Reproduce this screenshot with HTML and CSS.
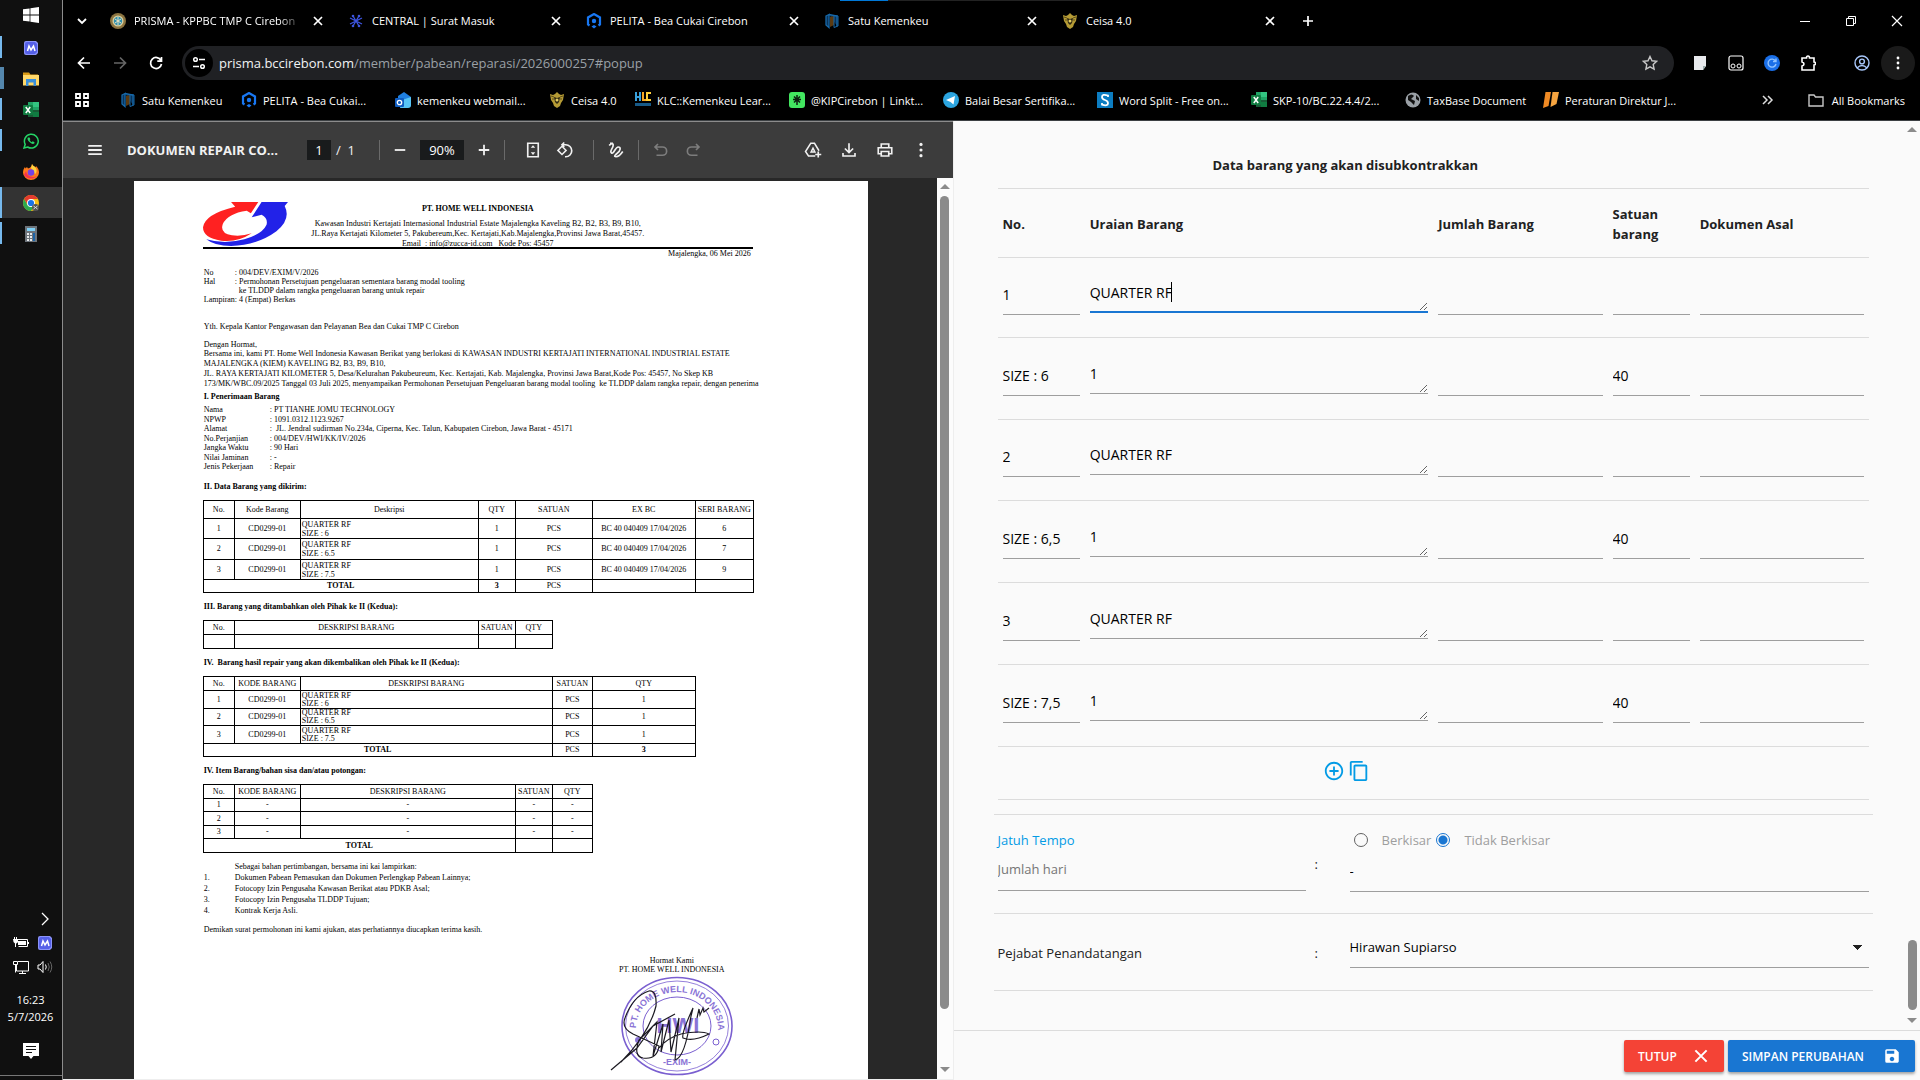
FILE: index.html
```html
<!DOCTYPE html>
<html lang="id">
<head>
<meta charset="utf-8">
<title>PRISMA - KPPBC TMP C Cirebon</title>
<link rel="stylesheet" href="styles.css">
</head>
<body>
<svg class="defs" aria-hidden="true">
  <symbol id="i-close" viewBox="0 0 16 16"><path d="M4 4l8 8M12 4l-8 8" stroke="currentColor" stroke-width="1.7" fill="none"/></symbol>
  <symbol id="i-m" viewBox="0 0 16 16"><path d="M3 1h10l2 2v10l-2 2H3q-2 0-2-2V3q0-2 2-2z" fill="#8b93f8"/><path d="M4 2h8l2 2v8l-2 2H4q-2 0-2-2V4q0-2 2-2z" fill="#5560e8"/><path d="M4.500 11L6 6l2 4 2.500-4L12 11" stroke="#fff" stroke-width="1.500" fill="none"/></symbol>
  <symbol id="i-excel" viewBox="0 0 16 16"><path d="M5 0h5v4H5z" fill="#21a366"/><path d="M10 0h6v5h-6z" fill="#33c481"/><path d="M5 4h5v4H5z" fill="#107c41"/><path d="M10 5h6v5h-6z" fill="#21a366"/><path d="M5 8h11v7H5z" fill="#185c37"/><path d="M10 10h6v5h-6z" fill="#107c41"/><rect y="3" width="10" height="10" rx="1" fill="#107c41"/><path d="M2.800 5l4.400 6M7.200 5l-4.400 6" stroke="#fff" stroke-width="1.500"/></symbol>
  <symbol id="i-pelita" viewBox="0 0 16 16"><path d="M3.500 12.500L2 11.500v-7L8 1l6 3.500v7l-1.500 1" fill="none" stroke="#1877f2" stroke-width="2.200"/><circle cx="8" cy="8" r="2.200" fill="#1877f2"/><path d="M5.500 13.500L8 12l2.500 1.500L8 15.600z" fill="#1877f2"/></symbol>
  <symbol id="i-satu" viewBox="0 0 16 16"><path d="M5 1.500l8 1.500v10M2 3l3-1.500v13L2 12z" fill="#0a3358" stroke="#1769aa" stroke-width="1.300"/><path d="M6 4l4-1v9l-4 2z" fill="#5b3a10"/><path d="M10 2.500l4 .5v10l-4 1.500z" fill="none" stroke="#1769aa"/></symbol>
  <symbol id="i-ceisa" viewBox="0 0 16 16"><path d="M1 2l3 1 2-1 2-2 2 2 2 1 3-1-1 6-2 3-1 3-3 2-3-2-1-3-2-3z" fill="#b59b35"/><path d="M5 5l3 1 3-1-1 5-2 2-2-2z" fill="#2c2610"/><circle cx="8" cy="8" r="1.500" fill="#e4cd62"/><path d="M2 4l3 1M14 4l-3 1M3 7h2M13 7h-2" stroke="#4c4014" stroke-width=".8"/></symbol>
  <symbol id="i-dots" viewBox="0 0 16 16"><g fill="currentColor"><circle cx="8" cy="3" r="1.400"/><circle cx="8" cy="8" r="1.400"/><circle cx="8" cy="13" r="1.400"/></g></symbol>
</svg>

<nav class="taskbar" aria-label="Taskbar">
  <ul class="task-list">
    <li class="task start"><button aria-label="Start"><svg viewBox="0 0 16 16"><path d="M0 2.300L6.600 1.400v6.200H0zM7.400 1.300L16 0v7.600H7.400zM0 8.400h6.600v6.200L0 13.700zM7.400 8.400H16V16l-8.600-1.300z" fill="#fff"/></svg></button></li>
    <li class="task open"><button aria-label="Mail"><svg><use href="#i-m"/></svg></button></li>
    <li class="task open multi"><button aria-label="Explorer"><svg viewBox="0 0 16 16"><path d="M0 1.500h6l1.500 2H15v3H0z" fill="#d99a16"/><path d="M0 4h16v10.500H0z" fill="#ffd869"/><path d="M3 8h10v7H10.500v-3.500h-5V15H3z" fill="#3a8fdb"/></svg></button></li>
    <li class="task open"><button aria-label="Excel"><svg><use href="#i-excel"/></svg></button></li>
    <li class="task open"><button aria-label="WhatsApp"><svg viewBox="0 0 16 16"><path d="M1 15l1.200-3.700A6.900 6.900 0 1 1 4.700 14z" fill="none" stroke="#25d366" stroke-width="1.500"/><path d="M5 4.500c-1 1-.5 2.500 1.200 4.300S10 11.500 11.300 10.400l.2-1.200-1.800-.9-1 .9C7.800 8.800 7 8 6.600 7.100l.8-.8L6.500 4.500z" fill="#25d366"/></svg></button></li>
    <li class="task"><button aria-label="Firefox"><svg viewBox="0 0 16 16"><path d="M9 0c1 2 2 2 3.500 3.500L13 2c2 2 3 4 3 6.500A8 7.500 0 0 1 0 8.500C0 6 1 4 2 3l.5 1.500L4 3l1 1.500C7 4 9 2.500 9 0z" fill="#ff7a1a"/><path d="M9 0c1 2 2 2 3.500 3.500C14 5 14 9 12 10L8 4z" fill="#ffd23e"/><path d="M1 11a8 7 0 0 0 13 1c-4 2-10 1-11-5z" fill="#f5314f"/><circle cx="8" cy="8.500" r="3.300" fill="#7542e5"/></svg></button></li>
    <li class="task open active"><button aria-label="Chrome"><svg viewBox="0 0 16 16"><circle cx="8" cy="8" r="8" fill="#fbc116"/><path d="M1 4a8 8 0 0 1 14 0H8L5 10z" fill="#e33b2e"/><path d="M1.100 4A8 8 0 0 0 8 16l3.500-6H4.500z" fill="#2da94f"/><circle cx="8" cy="8" r="4" fill="#fff"/><circle cx="8" cy="8" r="3.100" fill="#1a73e8"/><circle cx="12.500" cy="12.500" r="3.500" fill="#555"/><path d="M10.500 11l4 3M14.500 11l-4 3" stroke="#ddd"/></svg></button></li>
    <li class="task open"><button aria-label="Calculator"><svg viewBox="0 0 16 16"><path d="M2 0h12v16H2z" fill="#6d747b"/><path d="M4 2h8v3H4z" fill="#7fd0f5"/><path d="M4 7h2v2H4zM7 7h2v2H7zM4 10h2v2H4zM7 10h2v2H7zM4 13h2v2H4zM7 13h2v2H7z" fill="#e8eaec"/><path d="M10 7h2v8h-2z" fill="#1d64a8"/></svg></button></li>
  </ul>
  <div class="tray">
    <button class="tray-more" aria-label="Show hidden icons"><svg viewBox="0 0 16 16"><path d="M5 2l6 6-6 6" stroke="#fff" stroke-width="1.300" fill="none"/></svg></button>
    <div class="tray-icons">
      <svg viewBox="0 0 16 16"><path d="M2.500 4.500h12v7h-9" fill="none" stroke="#fff"/><path d="M5 6h8v4H5zM15 7h1v2h-1zM0 4h5v3q-2 3-4.500 0zM1 2h1v2H1zM3 2h1v2H3z" fill="#fff"/><path d="M2.500 7v5" stroke="#fff"/></svg>
      <svg><use href="#i-m"/></svg>
      <svg viewBox="0 0 16 16"><path d="M3.500 6v6h12V2.500H5M9.500 12v2.500M6 14.500h7M.5 2.500h4v3h-4zM2.500 5.500v8" fill="none" stroke="#fff"/></svg>
      <svg viewBox="0 0 16 16"><path d="M1 6h2l3-3.500v11L3 10H1z" fill="none" stroke="#fff"/><path d="M8.500 5.500q1.500 2.500 0 5" fill="none" stroke="#fff"/><path d="M11 4q2.500 4 0 8M13 2.500q3.500 5.500 0 11" fill="none" stroke="#666"/></svg>
    </div>
    <p class="clock">16:23<br>5/7/2026</p>
    <button class="notif" aria-label="Notifications"><svg viewBox="0 0 16 16"><path d="M0 0h16v13h-5.500L8 16l-2.500-3H0z" fill="#fff"/><path d="M3 3.500h10M3 6.500h10M3 9.500h6" stroke="#101010"/></svg></button>
  </div>
</nav>

<div class="browser">
  <header class="chrome">
    <div class="top-strip"></div>
    <div class="tabs">
      <button class="tab-search" aria-label="Search tabs"><svg viewBox="0 0 16 16"><path d="M4 6l4 4 4-4" stroke="#fff" stroke-width="1.800" fill="none"/></svg></button>
      <div class="tab"><svg viewBox="0 0 16 16"><circle cx="8" cy="8" r="8" fill="#8c7440"/><circle cx="8" cy="8" r="5.500" fill="#d8cfa0"/><circle cx="8" cy="8" r="4.200" fill="#2f8fae"/><path d="M5 6l6 4M11 6l-6 4M8 4v8" stroke="#e7e2c0"/></svg><span class="tab-title faded">PRISMA - KPPBC TMP C Cirebon</span><button aria-label="Close"><svg><use href="#i-close"/></svg></button></div>
      <div class="tab"><svg viewBox="0 0 16 16"><path d="M5 3l6 10M11 3L5 13M2 5l12 6M14 5L2 11" stroke="#3d55e0" stroke-width="1.300"/><g fill="#3d55e0"><circle cx="5" cy="3" r="1.300"/><circle cx="11" cy="3" r="1.300"/><circle cx="5" cy="13" r="1.300"/><circle cx="11" cy="13" r="1.300"/></g></svg><span class="tab-title">CENTRAL | Surat Masuk</span><button aria-label="Close"><svg><use href="#i-close"/></svg></button></div>
      <div class="tab"><svg><use href="#i-pelita"/></svg><span class="tab-title">PELITA - Bea Cukai Cirebon</span><button aria-label="Close"><svg><use href="#i-close"/></svg></button></div>
      <div class="tab"><svg><use href="#i-satu"/></svg><span class="tab-title">Satu Kemenkeu</span><button aria-label="Close"><svg><use href="#i-close"/></svg></button></div>
      <div class="tab"><svg><use href="#i-ceisa"/></svg><span class="tab-title">Ceisa 4.0</span><button aria-label="Close"><svg><use href="#i-close"/></svg></button></div>
      <button class="new-tab" aria-label="New tab"><svg viewBox="0 0 16 16"><path d="M8 3v10M3 8h10" stroke="#fff" stroke-width="1.700"/></svg></button>
      <div class="win-controls">
        <button aria-label="Minimize"><svg viewBox="0 0 16 16"><path d="M3 8.500h10" stroke="#fff"/></svg></button>
        <button aria-label="Restore"><svg viewBox="0 0 16 16"><path d="M3.500 5.500h7v7h-7zM5.500 5.500v-2h7v7h-2" stroke="#fff" fill="none"/></svg></button>
        <button aria-label="Close window"><svg viewBox="0 0 16 16"><path d="M3 3l10 10M13 3L3 13" stroke="#fff" stroke-width="1.200"/></svg></button>
      </div>
    </div>
    <div class="address-row">
      <button aria-label="Back"><svg viewBox="0 0 16 16"><path d="M14 8H3M8 2.500L2.500 8 8 13.500" stroke="#fff" stroke-width="1.700" fill="none"/></svg></button>
      <button aria-label="Forward"><svg viewBox="0 0 16 16"><path d="M2 8h11M8 2.500L13.500 8 8 13.500" stroke="#666" stroke-width="1.700" fill="none"/></svg></button>
      <button aria-label="Reload"><svg viewBox="0 0 16 16"><path d="M13 5.500A5.500 5.500 0 1 0 13.500 9M13.500 2v4.200H9.300" stroke="#fff" stroke-width="1.700" fill="none"/></svg></button>
      <div class="omnibox">
        <button class="site-info" aria-label="Site information"><svg viewBox="0 0 16 16"><circle cx="4.500" cy="4.500" r="1.800" stroke="#fff" stroke-width="1.500" fill="none"/><circle cx="11.500" cy="11.500" r="1.800" stroke="#fff" stroke-width="1.500" fill="none"/><path d="M8 4.500h6M2 11.500h6" stroke="#fff" stroke-width="1.500"/></svg></button>
        <span class="url"><b>prisma.bccirebon.com</b>/member/pabean/reparasi/2026000257#popup</span>
        <button class="star" aria-label="Bookmark"><svg viewBox="0 0 16 16"><path d="M8 1.500l2 4.300 4.600.5-3.400 3.200.9 4.700L8 11.800l-4.100 2.400.9-4.700L1.400 6.300 6 5.800z" fill="none" stroke="#c7c7c7" stroke-width="1.400"/></svg></button>
      </div>
      <div class="extensions">
        <button aria-label="Notes"><svg viewBox="0 0 16 16"><path d="M2 1h12v10l-3 4H2z" fill="#e8eaed"/><path d="M14 11h-3v4z" fill="#9aa"/></svg></button>
        <button aria-label="Extension"><svg viewBox="0 0 16 16"><rect x="1" y="1" width="14" height="14" rx="2" fill="none" stroke="#fff" stroke-width="1.200"/><circle cx="5" cy="11" r="2" fill="none" stroke="#fff"/><circle cx="11" cy="11" r="2" fill="none" stroke="#fff"/></svg></button>
        <button aria-label="Sync"><svg viewBox="0 0 16 16"><circle cx="8" cy="8" r="8" fill="#1a6fe8"/><path d="M11.500 6A4 4 0 1 0 12 9M12 3.500v3H9" fill="none" stroke="#8fc2ff" stroke-width="1.400"/></svg></button>
        <button aria-label="Extensions"><svg viewBox="0 0 16 16"><path d="M2 3h4.500q0-2 1.500-2t1.500 2H14v4q1.500 0 1.500 1.500T14 10v5H2v-4q2-.5 2-2t-2-2z" fill="none" stroke="#fff" stroke-width="1.600"/></svg></button>
        <button class="profile" aria-label="Profile"><svg viewBox="0 0 16 16"><g fill="none" stroke="#a8c7fa" stroke-width="1.400"><circle cx="8" cy="8" r="7"/><circle cx="8" cy="6.500" r="2.400"/><path d="M3 13q5-5 10 0"/></g></svg></button>
        <button class="menu" aria-label="Menu"><svg><use href="#i-dots"/></svg></button>
      </div>
    </div>
    <nav class="bookmarks" aria-label="Bookmarks">
      <button class="apps" aria-label="Apps"><svg viewBox="0 0 16 16"><path d="M2 2h4v4H2zM10 2h4v4h-4zM2 10h4v4H2zM10 10h4v4h-4z" fill="none" stroke="#fff" stroke-width="1.800"/></svg></button>
      <a class="bm bm-s" href="#"><svg><use href="#i-satu"/></svg>Satu Kemenkeu</a>
      <a class="bm" href="#"><svg><use href="#i-pelita"/></svg>PELITA - Bea Cukai...</a>
      <a class="bm" href="#"><svg viewBox="0 0 16 16"><path d="M3 4l6-4 7 5v8q0 2-2 2H3z" fill="#1f7fe0"/><path d="M7 8l9-3v8q0 3-3 3H5z" fill="#58c5f5"/><rect y="6" width="9" height="9" rx="1" fill="#0f5cc0"/><circle cx="4.500" cy="10.500" r="2.200" stroke="#fff" stroke-width="1.300" fill="none"/></svg>kemenkeu webmail...</a>
      <a class="bm bm-xs" href="#"><svg><use href="#i-ceisa"/></svg>Ceisa 4.0</a>
      <a class="bm" href="#"><svg viewBox="0 0 16 16"><path d="M0 0h2v4h2V0h2v9H4V6H2v3H0z" fill="#38a0dc"/><path d="M7 0h2v7h3v2H7z" fill="#f5a623"/><path d="M11 0h5v2h-3v5h3v2h-5z" fill="#ffcf3a"/><path d="M0 11h16v3H0z" fill="#175a88"/></svg>KLC::Kemenkeu Lear...</a>
      <a class="bm" href="#"><svg viewBox="0 0 16 16"><rect width="16" height="16" rx="3" fill="#43e660"/><path d="M8 3v10M4 7.500h8M5 4.500l6 6M11 4.500l-6 6" stroke="#0c1f10" stroke-width="1.500"/></svg>@KIPCirebon | Linkt...</a>
      <a class="bm" href="#"><svg viewBox="0 0 16 16"><circle cx="8" cy="8" r="8" fill="#2ca5e0"/><path d="M3 8l9-4-1.500 8.500L7.500 10z" fill="#fff"/></svg>Balai Besar Sertifika...</a>
      <a class="bm" href="#"><svg viewBox="0 0 16 16"><path d="M0 0h16v16H0z" fill="#0c7dc2"/><path d="M11 5V3.500Q5 1.500 5 5q0 2 3 3t3 3.200q0 3.300-6 1.500V11" fill="none" stroke="#fff" stroke-width="1.800"/></svg>Word Split - Free on...</a>
      <a class="bm" href="#"><svg><use href="#i-excel"/></svg>SKP-10/BC.22.4.4/2...</a>
      <a class="bm bm-m" href="#"><svg viewBox="0 0 16 16"><circle cx="8" cy="8" r="7.500" fill="#9aa0a6"/><path d="M3 4q4-3 6 0l-3 3 4 2-1 4-3-3-3-2zM11 3l3 3v3l-3-2z" fill="#111"/></svg>TaxBase Document</a>
      <a class="bm" href="#"><svg viewBox="0 0 16 16"><path d="M2.500 0H8L5.500 14 0 16z" fill="#f08a24"/><path d="M9.500 0H16l-2.500 12-6 3z" fill="#f7a540"/></svg>Peraturan Direktur J...</a>
      <button class="overflow" aria-label="More bookmarks"><svg viewBox="0 0 16 16"><path d="M4 4l4 4-4 4M9 4l4 4-4 4" stroke="#ddd" stroke-width="1.500" fill="none"/></svg></button>
      <a class="bm all" href="#"><svg viewBox="0 0 16 16"><path d="M1 3h5l1.500 2H15v9H1z" fill="none" stroke="#c7c7c7" stroke-width="1.400"/></svg>All Bookmarks</a>
    </nav>
  </header>

  <main class="split">
    <section class="viewer">
      <div class="pdf-bar">
        <button class="pdf-menu" aria-label="Menu"><svg viewBox="0 0 24 24"><path d="M3 6.500h18M3 12h18M3 17.500h18" stroke="currentColor" stroke-width="2.400"/></svg></button>
        <span class="pdf-title">DOKUMEN REPAIR CO...</span>
        <input class="pdf-page" value="1" aria-label="Page"><span class="pdf-total">/&nbsp; 1</span>
        <div class="pdf-group zoom">
          <button aria-label="Zoom out"><svg viewBox="0 0 24 24"><path d="M5 12h14" stroke="currentColor" stroke-width="2.400"/></svg></button>
          <input class="pdf-zoom" value="90%" aria-label="Zoom">
          <button aria-label="Zoom in"><svg viewBox="0 0 24 24"><path d="M5 12h14M12 5v14" stroke="currentColor" stroke-width="2.400"/></svg></button>
        </div>
        <div class="pdf-group fit">
          <button aria-label="Fit to page"><svg viewBox="0 0 24 24"><path d="M5 3h14v18H5z" fill="none" stroke="currentColor" stroke-width="2.200"/><path d="M12 5.500l3 3.500H9zM12 18.500l3-3.500H9z" fill="currentColor"/></svg></button>
          <button aria-label="Rotate"><svg viewBox="0 0 24 24"><path d="M8 7l5.500 5.500L8 18l-5.500-5.500z" fill="none" stroke="currentColor" stroke-width="2"/><path d="M11 2L8 5l3 3M9 5h4a8 8 0 0 1 0 16h-1" fill="none" stroke="currentColor" stroke-width="2.200"/></svg></button>
        </div>
        <div class="pdf-group">
          <button aria-label="Draw"><svg viewBox="0 0 24 24"><path d="M3 6c3-4 6-3 5 1s-5 7-2 9 5-8 9-8 3 5-1 8-5 5-2 5c4 0 7-4 9-7M4 3h4" fill="none" stroke="currentColor" stroke-width="2.200"/></svg></button>
        </div>
        <div class="pdf-group muted">
          <button aria-label="Undo"><svg viewBox="0 0 24 24"><path d="M8 4L4 8l4 4M4 8h10a5 5 0 0 1 0 11H6" fill="none" stroke="currentColor" stroke-width="2.200"/></svg></button>
          <button aria-label="Redo"><svg viewBox="0 0 24 24"><path d="M16 4l4 4-4 4M20 8H10a5 5 0 0 0 0 11h8" fill="none" stroke="currentColor" stroke-width="2.200"/></svg></button>
        </div>
        <div class="pdf-right">
          <button aria-label="Save to Drive"><svg viewBox="0 0 24 24"><path d="M15 20H6l-4-6L9 3h5l6 10M9.500 14.500h5L12 9.500z" fill="none" stroke="currentColor" stroke-width="2"/><path d="M19 14v8M15 18h8" stroke="currentColor" stroke-width="2.200"/></svg></button>
          <button aria-label="Download"><svg viewBox="0 0 24 24"><path d="M12 3v12M6.500 10l5.500 5.500L17.500 10M4 16v4h16v-4" fill="none" stroke="currentColor" stroke-width="2.200"/></svg></button>
          <button aria-label="Print"><svg viewBox="0 0 24 24"><path d="M7 8V4h10v4M7 17H3V9h18v8h-4M7 14h10v6H7z" fill="none" stroke="currentColor" stroke-width="2.200"/></svg></button>
          <button aria-label="More"><svg><use href="#i-dots"/></svg></button>
        </div>
      </div>
      <div class="pdf-body">
        <div class="pdf-canvas">
          <article class="paper">
            <header class="letterhead">
              <svg class="logo" viewBox="0 0 206 132" preserveAspectRatio="none"><path d="M68 0h66l-18 34-10-8Q60 34 48 66q-8 28 22 34 24 4 48-6-34 28-74 22Q0 108 0 76 4 36 78 14z" fill="#ff2121"/><path d="M142 0h64l-8 12q16 40-20 76-46 42-110 44-40 0-60-20 44 16 92 0 44-16 54-44 4-20-12-30l-24 8z" fill="#2222e8"/></svg>
              <div class="head-text">
                <h2>PT. HOME WELL INDONESIA</h2>
                <p>Kawasan Industri Kertajati Internasional Industrial Estate Majalengka Kaveling B2, B2, B3, B9, B10,</p>
                <p>JL.Raya Kertajati Kilometer 5, Pakubereum,Kec. Kertajati,Kab.Majalengka,Provinsi Jawa Barat,45457.</p>
                <p><u>Email &nbsp;: info@zucca-id.com &nbsp; Kode Pos: 45457</u></p>
              </div>
            </header>
            <p class="date">Majalengka, 06 Mei 2026</p>
            <dl class="ref">
              <dt>No</dt><dd>: 004/DEV/EXIM/V/2026</dd>
              <dt>Hal</dt><dd>: Permohonan Persetujuan pengeluaran sementara barang modal tooling</dd>
              <dt></dt><dd>&nbsp; ke TLDDP dalam rangka pengeluaran barang untuk repair</dd>
              <dt>Lampiran</dt><dd>: 4 (Empat) Berkas</dd>
            </dl>
            <p class="to">Yth. Kepala Kantor Pengawasan dan Pelayanan Bea dan Cukai TMP C Cirebon</p>
            <p class="greet">Dengan Hormat,</p>
            <p class="intro">Bersama ini, kami PT. Home Well Indonesia Kawasan Berikat yang berlokasi di KAWASAN INDUSTRI KERTAJATI INTERNATIONAL INDUSTRIAL ESTATE<br>MAJALENGKA (KIEM) KAVELING B2, B3, B9, B10,<br>JL. RAYA KERTAJATI KILOMETER 5, Desa/Kelurahan Pakubeureum, Kec. Kertajati, Kab. Majalengka, Provinsi Jawa Barat,Kode Pos: 45457, No Skep KB<br>173/MK/WBC.09/2025 Tanggal 03 Juli 2025, menyampaikan Permohonan Persetujuan Pengeluaran barang modal tooling &nbsp;ke TLDDP dalam rangka repair, dengan penerima</p>
            <h3 class="first">I. Penerimaan Barang</h3>
            <dl class="receiver">
              <dt>Nama</dt><dd>: PT TIANHE JOMU TECHNOLOGY</dd>
              <dt>NPWP</dt><dd>: 1091.0312.1123.9267</dd>
              <dt>Alamat</dt><dd>: &nbsp;JL. Jendral sudirman No.234a, Ciperna, Kec. Talun, Kabupaten Cirebon, Jawa Barat - 45171</dd>
              <dt>No.Perjanjian</dt><dd>: 004/DEV/HWI/KK/IV/2026</dd>
              <dt>Jangka Waktu</dt><dd>: 90 Hari</dd>
              <dt>Nilai Jaminan</dt><dd>: -</dd>
              <dt>Jenis Pekerjaan</dt><dd>: Repair</dd>
            </dl>
            <h3>II. Data Barang yang dikirim:</h3>
            <table class="doc-table t2">
              <colgroup><col class="w31"><col class="w66"><col class="w178"><col class="w37"><col class="w77"><col class="w103"><col class="w58"></colgroup>
              <tr class="h18"><td>No.</td><td>Kode Barang</td><td>Deskripsi</td><td>QTY</td><td>SATUAN</td><td>EX BC</td><td>SERI BARANG</td></tr>
              <tr class="h20"><td>1</td><td>CD0299-01</td><td class="desc">QUARTER RF<br>SIZE : 6</td><td>1</td><td>PCS</td><td>BC 40 040409 17/04/2026</td><td>6</td></tr>
              <tr class="h21"><td>2</td><td>CD0299-01</td><td class="desc">QUARTER RF<br>SIZE : 6.5</td><td>1</td><td>PCS</td><td>BC 40 040409 17/04/2026</td><td>7</td></tr>
              <tr class="h20"><td>3</td><td>CD0299-01</td><td class="desc">QUARTER RF<br>SIZE : 7.5</td><td>1</td><td>PCS</td><td>BC 40 040409 17/04/2026</td><td>9</td></tr>
              <tr class="h13"><th colspan="3">TOTAL</th><th>3</th><td>PCS</td><td></td><td></td></tr>
            </table>
            <h3>III. Barang yang ditambahkan oleh Pihak ke II (Kedua):</h3>
            <table class="doc-table t3">
              <colgroup><col class="w31"><col class="w244"><col class="w37"><col class="w37"></colgroup>
              <tr class="h14"><td>No.</td><td>DESKRIPSI BARANG</td><td>SATUAN</td><td>QTY</td></tr>
              <tr class="h14"><td></td><td></td><td></td><td></td></tr>
            </table>
            <h3>IV. &nbsp;Barang hasil repair yang akan dikembalikan oleh Pihak ke II (Kedua):</h3>
            <table class="doc-table t4">
              <colgroup><col class="w31"><col class="w66"><col class="w252"><col class="w40"><col class="w103"></colgroup>
              <tr class="h14"><td>No.</td><td>KODE BARANG</td><td>DESKRIPSI BARANG</td><td>SATUAN</td><td>QTY</td></tr>
              <tr class="h18"><td>1</td><td>CD0299-01</td><td class="desc">QUARTER RF<br>SIZE : 6</td><td>PCS</td><td>1</td></tr>
              <tr class="h17"><td>2</td><td>CD0299-01</td><td class="desc">QUARTER RF<br>SIZE : 6.5</td><td>PCS</td><td>1</td></tr>
              <tr class="h18"><td>3</td><td>CD0299-01</td><td class="desc">QUARTER RF<br>SIZE : 7.5</td><td>PCS</td><td>1</td></tr>
              <tr class="h13"><th colspan="3">TOTAL</th><td>PCS</td><th>3</th></tr>
            </table>
            <h3>IV. Item Barang/bahan sisa dan/atau potongan:</h3>
            <table class="doc-table t5">
              <colgroup><col class="w31"><col class="w66"><col class="w215"><col class="w37"><col class="w40"></colgroup>
              <tr class="h14"><td>No.</td><td>KODE BARANG</td><td>DESKRIPSI BARANG</td><td>SATUAN</td><td>QTY</td></tr>
              <tr class="h13"><td>1</td><td>-</td><td>-</td><td>-</td><td>-</td></tr>
              <tr class="h14"><td>2</td><td>-</td><td>-</td><td>-</td><td>-</td></tr>
              <tr class="h13"><td>3</td><td>-</td><td>-</td><td>-</td><td>-</td></tr>
              <tr class="h14"><th colspan="3">TOTAL</th><td></td><td></td></tr>
            </table>
            <div class="attach">
              <p>Sebagai bahan pertimbangan, bersama ini kai lampirkan:</p>
              <ol>
                <li><span>1.</span>Dokumen Pabean Pemasukan dan Dokumen Perlengkap Pabean Lainnya;</li>
                <li><span>2.</span>Fotocopy Izin Pengusaha Kawasan Berikat atau PDKB Asal;</li>
                <li><span>3.</span>Fotocopy Izin Pengusaha TLDDP Tujuan;</li>
                <li><span>4.</span>Kontrak Kerja Asli.</li>
              </ol>
            </div>
            <p class="closing">Demikan surat permohonan ini kami ajukan, atas perhatiannya diucapkan terima kasih.</p>
            <div class="sign">
              <p>Hormat Kami</p>
              <p>PT. HOME WELL INDONESIA</p>
              <svg class="stamp" viewBox="0 0 126 104">
                <defs><path id="arc" d="M28 62A41 36 0 1 1 108 62"/></defs>
                <g fill="none" stroke="#7a5fd0"><ellipse cx="68" cy="52" rx="55" ry="48.500" stroke-width="1.600"/><ellipse cx="68" cy="52" rx="51.500" ry="45" stroke-width=".8"/><ellipse cx="68" cy="52" rx="34" ry="29"/></g>
                <g fill="#8a74d6" font-family="Liberation Sans, sans-serif" font-weight="700">
                  <text font-size="9"><textPath href="#arc" startOffset="8">PT. HOME WELL INDONESIA</textPath></text>
                  <text x="69" y="59" font-size="22" text-anchor="middle">HWI</text>
                  <text x="68" y="91" font-size="9" text-anchor="middle">-EXIM-</text>
                  <circle cx="29" cy="66" r="3"/><circle cx="107" cy="68" r="3" fill="none" stroke="#7a5fd0"/>
                </g>
                <path d="M2 96L28 74 44 52 66 40M12 88Q40 60 47 32 48 16 40 17 24 22 16 44 12 54 24 60L50 72Q48 86 34 84 24 82 30 66L48 48 44 82 54 50 52 78 60 46 62 78 70 44 66 86Q76 84 82 42L84 34Q72 60 74 64 84 68 100 60 92 56 72 60 58 64 50 74M88 44l2-9 1 6 3-7 1 4 5-4" fill="none" stroke="#1c1a22" stroke-width="1.200"/>
              </svg>
            </div>
          </article>
        </div>
        <div class="scrollbar"><i class="up"></i><i class="thumb"></i><i class="down"></i></div>
      </div>
    </section>

    <section class="panel">
      <div class="panel-scroll">
        <form class="form" id="subcon">
          <h1>Data barang yang akan disubkontrakkan</h1>
          <table class="goods">
            <colgroup><col class="c10"><col class="c40"><col class="c20"><col class="c10"><col class="c20"></colgroup>
            <thead><tr><th>No.</th><th>Uraian Barang</th><th>Jumlah Barang</th><th>Satuan barang</th><th>Dokumen Asal</th></tr></thead>
            <tbody>
              <tr class="current"><td><input aria-label="No" value="1"></td><td><div class="ta"><textarea aria-label="Uraian" class="focused">QUARTER RF</textarea><span class="caret"></span></div></td><td><input aria-label="Jumlah"></td><td><input aria-label="Satuan"></td><td><input aria-label="Dokumen"></td></tr>
              <tr><td><input aria-label="No" value="SIZE : 6"></td><td><div class="ta"><textarea aria-label="Uraian">1</textarea></div></td><td><input aria-label="Jumlah"></td><td><input aria-label="Satuan" value="40"></td><td><input aria-label="Dokumen"></td></tr>
              <tr class="tight"><td><input aria-label="No" value="2"></td><td><div class="ta"><textarea aria-label="Uraian">QUARTER RF</textarea></div></td><td><input aria-label="Jumlah"></td><td><input aria-label="Satuan"></td><td><input aria-label="Dokumen"></td></tr>
              <tr><td><input aria-label="No" value="SIZE : 6,5"></td><td><div class="ta"><textarea aria-label="Uraian">1</textarea></div></td><td><input aria-label="Jumlah"></td><td><input aria-label="Satuan" value="40"></td><td><input aria-label="Dokumen"></td></tr>
              <tr><td><input aria-label="No" value="3"></td><td><div class="ta"><textarea aria-label="Uraian">QUARTER RF</textarea></div></td><td><input aria-label="Jumlah"></td><td><input aria-label="Satuan"></td><td><input aria-label="Dokumen"></td></tr>
              <tr><td><input aria-label="No" value="SIZE : 7,5"></td><td><div class="ta"><textarea aria-label="Uraian">1</textarea></div></td><td><input aria-label="Jumlah"></td><td><input aria-label="Satuan" value="40"></td><td><input aria-label="Dokumen"></td></tr>
            </tbody>
            <tfoot><tr><td colspan="4"><div class="row-actions">
              <button type="button" aria-label="Tambah"><svg viewBox="0 0 24 24"><path d="M13 7h-2v4H7v2h4v4h2v-4h4v-2h-4V7zm-1-5C6.480 2 2 6.480 2 12s4.480 10 10 10 10-4.480 10-10S17.520 2 12 2zm0 18c-4.410 0-8-3.590-8-8s3.590-8 8-8 8 3.590 8 8-3.590 8-8 8z" fill="currentColor"/></svg></button>
              <button type="button" aria-label="Salin"><svg viewBox="0 0 24 24"><path d="M16 1H4c-1.100 0-2 .9-2 2v14h2V3h12V1zm3 4H8c-1.100 0-2 .9-2 2v14c0 1.100.9 2 2 2h11c1.100 0 2-.9 2-2V7c0-1.100-.9-2-2-2zm0 16H8V7h11v14z" fill="currentColor"/></svg></button>
            </div></td><td></td></tr></tfoot>
          </table>
          <div class="fields">
            <div class="field due">
              <div class="lead"><label for="hari">Jatuh Tempo</label><input id="hari" placeholder="Jumlah hari"></div>
              <span class="colon">:</span>
              <div class="value">
                <div class="radios">
                  <input type="radio" name="kisar" id="r1"><label for="r1">Berkisar</label>
                  <input type="radio" name="kisar" id="r2" checked><label for="r2">Tidak Berkisar</label>
                </div>
                <input aria-label="Keterangan" value="-">
              </div>
            </div>
            <div class="field signer">
              <label class="lead" for="pejabat">Pejabat Penandatangan</label>
              <span class="colon">:</span>
              <div class="value"><select id="pejabat"><option>Hirawan Supiarso</option></select></div>
            </div>
          </div>
        </form>
        <div class="scrollbar side"><i class="up"></i><i class="thumb"></i><i class="down"></i></div>
      </div>
      <footer class="actions">
        <button class="btn red" type="button">TUTUP<svg viewBox="0 0 16 16"><path d="M3 3l10 10M13 3L3 13" stroke="currentColor" stroke-width="1.800"/></svg></button>
        <button class="btn blue" type="submit" form="subcon">SIMPAN PERUBAHAN<svg viewBox="0 0 24 24"><path d="M17 3H5a2 2 0 0 0-2 2v14a2 2 0 0 0 2 2h14c1.100 0 2-.9 2-2V7l-4-4zm-5 16c-1.660 0-3-1.340-3-3s1.340-3 3-3 3 1.340 3 3-1.340 3-3 3zm3-10H5V5h10v4z" fill="currentColor"/></svg></button>
      </footer>
    </section>
  </main>
</div>
</body>
</html>
```
FILE: styles.css
```css
* { box-sizing: border-box; }
html, body { height: 100%; }
body {
  margin: 0;
  display: flex;
  background: #000;
  font-family: "Open Sans", "Noto Sans", sans-serif;
  font-size: 13px;
  overflow: hidden;
}
button { border: 0; padding: 0; margin: 0; background: none; color: inherit; font: inherit; display: flex; align-items: center; justify-content: center; }
button svg { width: 16px; height: 16px; display: block; }
p, h1, h2, h3, dl, dd, ol, ul { margin: 0; padding: 0; }
ul, ol { list-style: none; }
a { color: inherit; text-decoration: none; }
.defs { position: absolute; width: 0; height: 0; }

/* Taskbar */
.taskbar { flex: 0 0 63px; background: #101010; border-right: 1px solid #8c8c8c; display: flex; flex-direction: column; justify-content: space-between; color: #fff; }
.task { height: 31px; display: flex; justify-content: center; border-left: 2px solid transparent; padding-right: 2px; }
.task.start { height: 32px; padding-bottom: 2px; }
.task.open { border-image: linear-gradient(transparent 4px, #76b9ed 4px, #76b9ed 26px, transparent 26px) 0 0 0 2; }
.task.multi { border-left-width: 4px; padding-right: 4px; border-image: linear-gradient(transparent 4px, #5487ad 4px, #5487ad 26px, transparent 26px) 0 0 0 4; }
.task.active { background: #333; border-image: none; border-left-color: #76b9ed; }
.tray { border-bottom: 1px solid #777; margin-bottom: 4px; display: flex; flex-direction: column; align-items: center; }
.tray-more { align-self: flex-end; margin: 0 9px 8px 0; }
.tray-icons { display: grid; grid-template-columns: 16px 16px; gap: 8px; margin-left: 4px; }
.tray-icons svg { width: 16px; height: 16px; }
.clock { margin: 16px 1px 0 0; font-size: 11px; line-height: 17px; text-align: center; }
.notif { margin: 18px 0 16px; }

/* Browser frame */
.browser { flex: 1; min-width: 0; display: flex; flex-direction: column; color: #fff; }
.chrome { flex: none; background: #000; border-bottom: 1px solid #3c4043; font-size: 11px; position: relative; }
.top-strip { position: absolute; top: 0; left: 777px; width: 240px; height: 1px; background: linear-gradient(90deg, #0078d7 48px, #222 48px); }
.tabs { height: 41px; display: flex; align-items: center; padding-left: 5px; }
.tab-search { width: 28px; height: 28px; margin-right: 14px; }
.tab { flex: 0 1 238px; min-width: 0; display: flex; align-items: center; gap: 8px; padding-right: 22px; }
.tab > svg { width: 16px; height: 16px; flex: none; }
.tab-title { flex: 1; white-space: nowrap; overflow: hidden; line-height: 20px; }
.faded { -webkit-mask-image: linear-gradient(90deg, #000 145px, transparent 168px); mask-image: linear-gradient(90deg, #000 145px, transparent 168px); }
.tab svg, .new-tab svg { flex: none; }
.win-controls { margin-left: auto; display: flex; }
.win-controls button { width: 46px; height: 32px; }
.address-row { height: 44px; display: flex; align-items: center; padding: 0 5px 0 7px; }
.address-row > button { width: 28px; height: 28px; margin-right: 8px; }
.omnibox { flex: 1; height: 34px; margin-left: 4px; border-radius: 17px; background: #202124; display: flex; align-items: center; padding: 0 16px 0 3px; }
.site-info { width: 28px; height: 28px; border-radius: 14px; background: #000; }
.url { flex: 1; margin-left: 6px; font-size: 13px; color: #9aa0a6; }
.url b { color: #f1f3f4; font-weight: 400; }
.extensions { display: flex; align-items: center; gap: 20px; margin-left: 18px; }
.profile { margin-left: 18px; }
.menu { width: 34px; height: 34px; border-radius: 17px; background: #1a1a1a; margin-left: -9px; }
.bookmarks { height: 35px; display: flex; align-items: center; padding: 0 15px 5px 11px; white-space: nowrap; }
.apps { margin-right: 30px; }
.bm { flex: 0 1 154px; display: flex; align-items: center; gap: 6px; overflow: hidden; }
.bm svg { width: 16px; height: 16px; flex: none; }
.bm-s { flex-basis: 121px; }
.bm-xs { flex-basis: 86px; }
.bm-m { flex-basis: 138px; }
.overflow { margin-left: auto; }
.bm.all { flex: none; gap: 8px; margin-left: 33px; }

/* Split view */
.split { flex: 1; min-height: 0; display: flex; }
.viewer { flex: 890 1 0; min-width: 0; display: flex; flex-direction: column; background: #282828; border-top: 1px solid #8c8c8c; border-bottom: 1px solid #eee; }
.pdf-bar { flex: none; height: 56px; background: #3c3c3c; color: #f1f1f1; display: flex; align-items: center; padding: 0 20px 0 16px; }
.pdf-bar button { width: 24px; height: 24px; }
.pdf-bar button svg { width: 18px; height: 18px; }
.pdf-bar .pdf-menu { width: 32px; }
.pdf-title { width: 196px; padding-left: 16px; font-size: 13px; font-weight: 700; white-space: nowrap; }
.pdf-bar input { border: 0; background: #191b1c; color: #fff; height: 20px; padding: 0; text-align: center; font: inherit; }
.pdf-page { width: 24px; }
.pdf-zoom { width: 44px; }
.pdf-total { width: 48px; padding-left: 5px; white-space: nowrap; }
.pdf-group { height: 20px; display: flex; align-items: center; gap: 8px; padding: 0 10px; border-left: 1px solid #6a6a6a; }
.pdf-group.zoom { padding: 0 8px; }
.pdf-group.fit { padding: 0 16px; }
.muted { color: #7d7d7d; }
.pdf-right { margin-left: auto; display: flex; gap: 12px; }
.pdf-body { flex: 1; min-height: 0; display: flex; }
.pdf-canvas { flex: 1; overflow: hidden; padding: 3px 0 0 2px; }
.scrollbar { flex: 0 0 16px; background: #fcfcfc; display: flex; flex-direction: column; align-items: center; padding: 6px 0 7px; }
.scrollbar .up, .scrollbar .down { flex: none; border: 5px solid transparent; height: 0; width: 0; }
.scrollbar .up { border-top: 0; border-bottom-color: #8b8b8b; }
.scrollbar .down { border-bottom: 0; border-top-color: #8b8b8b; }
.scrollbar .thumb { width: 9px; border-radius: 5px; background: #8b8b8b; flex: 1; margin: 7px 0 58px; }

/* Letter */
.paper { width: 734px; min-height: 900px; margin: 0 auto; padding: 21px 115px 0 69px; background: #fff; color: #000; font: 8px/9px "Liberation Serif", serif; }
.letterhead { height: 47px; display: grid; grid-template-columns: 85px 1fr 85px; border-bottom: 2px solid #000; }
.logo { width: 85px; height: 44px; }
.head-text { text-align: center; line-height: 10px; white-space: nowrap; display: flex; flex-direction: column; align-items: center; padding-top: 2px; }
.head-text h2 { font-size: 8px; margin-bottom: 5px; }
.date { text-align: right; padding-right: 2px; }
.ref { display: grid; grid-template-columns: 31px 1fr; grid-auto-rows: 9px; margin: 10px 0 0 1px; }
.to { margin: 18px 0 9px 1px; }
.greet, .closing { margin-left: 1px; }
.intro { margin-left: 1px; line-height: 10px; white-space: nowrap; }
.paper h3 { font-size: 8px; margin: 9px 0 9px 1px; }
.paper h3.first { margin: 3px 0 4px 1px; }
.receiver { display: grid; grid-template-columns: 66px 1fr; grid-auto-rows: 10px 9px; margin: 0 0 10px 1px; }
.doc-table { border-collapse: collapse; table-layout: fixed; text-align: center; line-height: 8px; }
.doc-table td, .doc-table th { border: 1px solid #000; padding: 0; white-space: nowrap; }
.doc-table .desc { text-align: left; padding-left: 1px; }
.t2 .desc { line-height: 9px; }
.t2 { width: 551px; } .t3 { width: 350px; } .t4 { width: 493px; } .t5 { width: 390px; }
.w31 { width: 31px; } .w37 { width: 37px; } .w40 { width: 40px; } .w58 { width: 58px; } .w66 { width: 66px; } .w77 { width: 77px; }
.w103 { width: 103px; } .w178 { width: 178px; } .w215 { width: 215px; } .w244 { width: 244px; } .w252 { width: 252px; }
.h13 { height: 13px; } .h14 { height: 14px; } .h17 { height: 17px; } .h18 { height: 18px; } .h20 { height: 20px; } .h21 { height: 21px; }
.attach { margin: 8px 0 9px 1px; line-height: 11px; }
.attach p { margin-left: 31px; }
.attach li { display: flex; }
.attach span { width: 31px; }
.sign { width: 126px; margin: 22px 0 0 406px; text-align: center; }
.stamp { display: block; width: 126px; height: 104px; }

/* Form panel */
.panel { flex: 967 1 0; min-width: 0; display: flex; flex-direction: column; background: #fafafa; color: #212121; border-left: 1px solid #eee; }
.panel-scroll { flex: 1; min-height: 0; display: flex; }
.form { flex: 1; min-width: 0; padding: 34px 31px 0 40px; }
.side { background: none; }
.side .thumb { flex: 0 0 70px; margin: auto 0 8px; }
.form h1 { width: 80%; font-size: 13px; line-height: 20px; font-weight: 700; text-align: center; margin: 0 0 13px; }
.goods { width: calc(100% - 8px); margin: 0 4px; border-collapse: separate; border-spacing: 0; table-layout: fixed; border-top: 1px solid #dcdcdc; }
.c10 { width: 10%; } .c20 { width: 20%; } .c40 { width: 40%; }
.goods th, .goods td { border-bottom: 1px solid #dcdcdc; padding: 0 5px; text-align: left; }
.goods th { height: 69px; padding-top: 2px; line-height: 20px; font-weight: 700; }
.goods tbody td { height: 82px; vertical-align: top; padding-top: 16px; }
.goods .tight td { height: 81px; padding-top: 15px; }
.goods .current td { height: 80px; padding-top: 15px; }
.form input:not([type="radio"]), .form textarea, .form select {
  display: block; width: 100%; height: 42px; padding: 1px 0 0; border: 0; border-bottom: 1px solid #9e9e9e;
  border-radius: 0; background: transparent; color: #000; font: inherit; outline: 0;
}
.form .goods input, .form .goods textarea { font-size: 14px; }
.form .ta textarea { height: 40px; padding: 10px 0 0; line-height: 20px; resize: vertical; overflow: hidden; }
.form .ta .focused { border-bottom: 2px solid #1976d2; }
.ta { position: relative; }
.caret { position: absolute; left: 81px; top: 9px; width: 1px; height: 20px; background: #000; }
.goods tfoot td { height: 53px; }
.row-actions { display: flex; justify-content: center; gap: 3px; color: #039be5; padding-bottom: 4px; }
.row-actions svg { width: 22px; height: 22px; }
.fields { margin-top: 14px; border-top: 1px solid #dcdcdc; }
.field { display: grid; grid-template-columns: 308px 44px 1fr; padding: 0 4px; border-bottom: 1px solid #dcdcdc; }
.colon { padding-left: 9px; }
.due { height: 99px; padding-top: 15px; }
.due .lead label { color: #039be5; line-height: 20px; display: block; }
.due .colon { padding-top: 25px; }
.form .due .lead input { height: 41px; padding: 0 0 2px; }
.form ::placeholder { color: #757575; }
.radios { display: flex; align-items: center; height: 20px; color: #9e9e9e; }
.radios input { appearance: none; width: 14px; height: 14px; margin: 0 14px 0 4px; border: 1px solid #616161; border-radius: 50%; }
.radios label + input { margin-left: 5px; }
.radios input:checked { border-color: #1976d2; background: radial-gradient(#1976d2 4px, transparent 5px); }
.form .due .value > input { height: 42px; }
.signer { height: 77px; align-items: center; padding-top: 2px; }
.form .signer select {
  height: 41px; padding: 0; margin-bottom: 12px; appearance: none;
  background: conic-gradient(from -45deg at 50% 100%, #212121 90deg, transparent 90deg) right 7px top 18px / 9px 5px no-repeat;
}
.actions { flex: none; height: 50px; border-top: 1px solid #dcdcdc; display: flex; justify-content: flex-end; gap: 4px; padding: 9px 5px 0; }
.btn { height: 32px; padding: 0 14px; border-radius: 2px; color: #fff; font-size: 12px; font-weight: 600; justify-content: space-between; box-shadow: 0 2px 3px rgba(0, 0, 0, .35); }
.red { width: 100px; background: #f44336; }
.blue { width: 187px; background: #1976d2; }
.btn svg { width: 18px; height: 18px; }
```
